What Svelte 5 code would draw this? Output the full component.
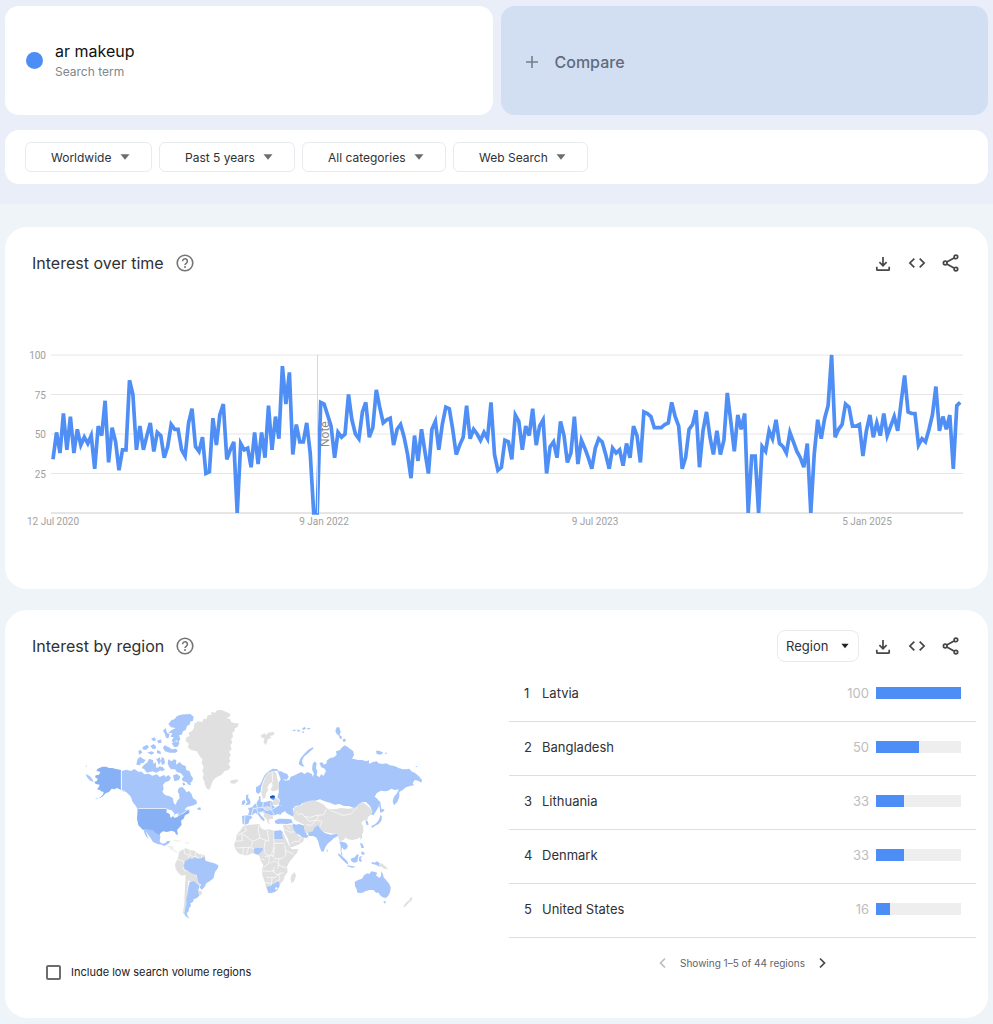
<script lang="ts">
	type Region = { name: string; value: number };

	const filters = ['Worldwide', 'Past 5 years', 'All categories', 'Web Search'];

	const regions: Region[] = [
		{ name: 'Latvia', value: 100 },
		{ name: 'Bangladesh', value: 50 },
		{ name: 'Lithuania', value: 33 },
		{ name: 'Denmark', value: 33 },
		{ name: 'United States', value: 16 }
	];

	// weekly interest, 0-100
	const interest = [
		34, 51, 38, 63, 40, 61, 38, 53, 43, 48, 44, 49, 28, 55, 49, 71, 32, 54, 45, 27,
		40, 40, 84, 75, 40, 55, 40, 49, 57, 39, 51, 49, 35, 42, 56, 53, 53, 40, 36, 57,
		66, 42, 39, 48, 25, 26, 60, 43, 62, 69, 34, 40, 45, 0, 44, 40, 41, 29, 51, 31,
		51, 35, 68, 40, 61, 47, 93, 69, 89, 37, 56, 45, 45, 57, 38, 0, 0, 70, 69, 62,
		55, 35, 51, 48, 50, 75, 59, 50, 47, 64, 70, 48, 54, 78, 67, 57, 59, 60, 43, 53,
		56, 48, 37, 22, 49, 33, 53, 39, 25, 53, 58, 40, 56, 67, 66, 53, 37, 43, 48, 68,
		47, 53, 50, 46, 51, 47, 70, 37, 27, 29, 46, 45, 34, 62, 58, 40, 55, 49, 66, 43,
		55, 59, 25, 42, 45, 35, 58, 49, 32, 38, 61, 31, 46, 41, 35, 28, 41, 47, 45, 37,
		28, 41, 38, 40, 30, 44, 35, 55, 49, 32, 64, 63, 61, 54, 54, 54, 56, 57, 70, 61,
		55, 28, 35, 53, 56, 65, 29, 52, 64, 48, 37, 52, 37, 46, 76, 58, 39, 62, 53, 63,
		0, 36, 36, 0, 42, 39, 52, 47, 59, 44, 42, 38, 51, 45, 39, 35, 29, 44, 0, 37,
		59, 47, 60, 68, 100, 48, 53, 56, 69, 67, 55, 55, 56, 36, 52, 62, 48, 57, 49, 63,
		49, 55, 61, 52, 70, 87, 64, 63, 63, 43, 47, 45, 53, 62, 80, 52, 61, 53, 62, 28,
		68, 70
	];

	const ticks = [100, 75, 50, 25];
	const dates = [
		{ x: 48, label: '12 Jul 2020' },
		{ x: 319, label: '9 Jan 2022' },
		{ x: 590, label: '9 Jul 2023' },
		{ x: 862, label: '5 Jan 2025' }
	];

	const yOf = (value: number) => 168 - value * 1.58;
	const line = interest.map((v, i) => `${(48 + i * 3.476).toFixed(1)},${yOf(v).toFixed(1)}`).join(' ');

	let lowVolume = $state(false);
</script>

{#snippet caret()}
	<svg class="caret" width="10" height="6" viewBox="0 0 10 6" aria-hidden="true"><path d="M.5.3h9L5 5.8z" /></svg>
{/snippet}

{#snippet help(label: string)}
	<button class="icon help" aria-label={label}>
		<svg width="18" height="18" viewBox="0 0 18 18">
			<circle cx="9" cy="9" r="7.8" />
			<path d="M6.6 7.2a2.4 2.4 0 1 1 3.9 1.9C9.6 9.8 9 10.1 9 11.1" />
			<circle class="dot" cx="9" cy="13.1" r="1" />
		</svg>
	</button>
{/snippet}

{#snippet tools()}
	<button class="icon" aria-label="Download CSV">
		<svg width="18" height="18" viewBox="0 0 18 18"><path d="M9 3v8.6M5.4 8.2 9 11.8l3.6-3.6M2.8 12.8v2.6q0 .8.8.8h10.8q.8 0 .8-.8v-2.6" /></svg>
	</button>
	<button class="icon" aria-label="Embed">
		<svg width="18" height="18" viewBox="0 0 18 18"><path d="M6.3 4.6 1.9 9l4.4 4.4M11.7 4.6 16.1 9l-4.4 4.4" /></svg>
	</button>
	<button class="icon" aria-label="Share">
		<svg width="18" height="18" viewBox="0 0 18 18">
			<path d="m4.8 8.1 7.2-4.2M4.8 9.9l7.2 4.2" />
			<circle cx="13.9" cy="2.9" r="1.8" />
			<circle cx="3.2" cy="9" r="1.8" />
			<circle cx="13.9" cy="15.1" r="1.8" />
		</svg>
	</button>
{/snippet}

<div class="page">
	<header>
		<div class="terms">
			<div class="term">
				<span class="bullet"></span>
				<div>
					<div class="term-name">ar makeup</div>
					<div class="term-type">Search term</div>
				</div>
			</div>
			<button class="compare">
				<svg width="14" height="14" viewBox="0 0 14 14" aria-hidden="true"><path d="M7 1v12M1 7h12" /></svg>
				Compare
			</button>
		</div>

		<div class="filters">
			{#each filters as filter}
				<div class="dropdown">
					<select aria-label={filter}>
						<option>{filter}</option>
					</select>
					{@render caret()}
				</div>
			{/each}
		</div>
	</header>

	<main>
		<section class="card">
			<div class="card-head">
				<h2>Interest over time</h2>
				{@render help('Help with interest over time')}
				<div class="tools">{@render tools()}</div>
			</div>
			<svg class="chart" viewBox="0 0 983 184" role="img" aria-label="Interest over time">
				{#each ticks as tick}
					<line class="grid" x1="46" x2="958" y1={yOf(tick)} y2={yOf(tick)} />
					<text x="41" y={yOf(tick) + 4} text-anchor="end">{tick}</text>
				{/each}
				<line class="axis" x1="46" x2="958" y1="168" y2="168" />
				<polyline points={line} />
				<line class="note-line" x1="312.5" x2="312.5" y1="10" y2="168" />
				<text class="note" transform="translate(324 102) rotate(-90)">Note</text>
				{#each dates as date}
					<text x={date.x} y="180" text-anchor="middle">{date.label}</text>
				{/each}
			</svg>
		</section>

		<section class="card">
			<div class="card-head">
				<h2>Interest by region</h2>
				{@render help('Help with interest by region')}
				<div class="tools">
					<div class="dropdown resolution">
						<select aria-label="Resolution">
							<option>Region</option>
						</select>
						{@render caret()}
					</div>
					{@render tools()}
				</div>
			</div>

			<div class="geo">
				<div class="geo-map">
					<svg class="map" viewBox="0 0 1080 690" role="img" aria-label="Interest by region">
						<!-- Greenland, Iceland -->
						<g class="none">
							<path d="M358 72L368 64 382 66 386 56 394 58 398 46 410 44 408 36 420 38 426 31 440 30 454 36 466 42 464 50 454 54 466 58 468 66 480 70 491 70 488 80 478 86 480 92 472 98 474 110 468 118 472 128 466 136 470 148 462 156 468 166 462 174 466 184 460 192 467 202 460 210 448 214 440 224 428 230 418 236 412 246 408 258 403 270 396 266 390 256 388 244 383 234 386 222 382 212 386 200 380 190 382 178 372 166 366 154 348 150 338 142 342 132 332 122 334 112 344 108 340 98 350 94 356 86z" />
							<path d="M465 243l8-3 14-2 2 6-10 7-12-1z" />
						</g>

						<!-- Canada -->
						<g class="low">
							<path d="M140 213l14-4 14 4 10-6 12 8 10 0 8 8 14-2 10 6 14-4 8 8 14-6 4 6 8-6 8 8-6 10-12 4-6 8 2 12-4 8 8 10 14 4 10 6 2 14 6 6 4-12 8-8-2-12-4-10 4-10 10-2 8 8 4 8 8-4 8 10 4 12 10 6 2 10-14 6-16 4-8 10 16-4-8 10-12 4-8 10-12 4-4-6-10-12-12-6-16 0H190l-8-14-10-12-4-14-14-14-14-4z" />
							<path d="M366 324l10-2 2 8-8 0z" />
							<path d="M280 72L290 60 298 58 306 48 318 44 332 43 346 42 356 50 354 62 344 66 346 72 336 78 332 90 324 94 320 104 312 106 316 116 310 128 304 120 296 128 290 122 296 112 286 110 292 100 280 98 290 90 302 84 288 82z" />
							<path d="M264 92l8-8 4 14 8 4-4 14-8-4-2-10zM290 130l12-6 12 4-6 12-10 2zM268 136l14 6 8 6 14-2 4 8-6 4h-18l-14-4-6-10z" />
							<path d="M228 116l10-4 6 8-8 4zM246 122l12-4 2 10-10 2zM204 140l12-6 6 8-10 8-10-2zM190 152l8-2 4 8-10 6zM226 138l10-6 8 8-4 8-8-2zM216 158l14-4 8 4-8 6zM246 150l10 4 2 8-12-2z" />
							<path d="M188 176l8-6 8 6 8 4-6 8-8 2-4 6-10-2 2-10zM206 196l12-10 4-10 12 4 2 12 6-6 2 18 10-4 4 10-14 8-12-4-16 4-8-10-8-4zM244 178l10-6 4 12-6 10zM260 170l8 6 2 14-8 6-4-12zM252 198l12 4 6 8-12 4z" />
							<path d="M280 178L290 184 296 178 304 180 303 194 314 186 322 194 332 198 334 210 344 214 348 226 354 234 352 244 346 248 348 256 340 254 334 246 324 244 320 236 326 230 318 220 306 216 300 208 288 208 282 200 278 190z" />
							<path d="M294 226l12-4 10 8-4 10-14 4zM322 248l6 0 4 8-8 0z" />
						</g>

						<!-- United States -->
						<g class="mid">
							<path d="M138 210v60l-12-6-8 4-8-2-8 10-10 4-10 10-12 6 14-12 2-8-8-2-4-4-8-2 6-8 2-6-12-2-4-6 8-4 2-6-8-4 2-6 10-2 4-8-12-4 4-6 14-6 12 0 8 4 10 0 8 2z" />
							<path d="M188 326h82l8 4 10 4 8 18 12-4 8-6 10-2 10-10 8 2-2 8-12 6-4 10-8 6 2 12-8 10-6 6 2 8 0 8-6-4-2-6-10-4-14 4-12-2-8 6-4 10-8-8-8-2-6-6-26-4-14-14-4-20z" />
						</g>
						<path class="low" d="M32 196l4 2-3 3zM32 222l12 6 8 10 4 8-10-4-10-10zM60 296l8-2-2 4z" />
						<path class="border" d="M139 212v58l10 4 16 16 6 16M190 325.500H272l8 4M302 352l14-8 14-8 12-10" />
						<path class="water" d="M276 328l14 3 8 9-6 10-5 4-3-12-10-5zM299 343l12-3-4 10-10 4z" />

						<!-- Mexico and Central America -->
						<path class="low" d="M206 386l28 5 8 8 8 4 6 6-2 16 8 6 8-1 6-6 10-2-4 8-8 4-6 4-8-4-12-2-14-6-6-10-10-14-6-8 6 16 4 8-10-10-4-10z" />
						<path class="none faint" d="M270 433l10 4 14 2 2 10 12 6-2 4-14-8-12-10zM296 420l14 0 10 5 6 1-14-1-16-2zM330 426l14 2-4 4-10-3z" />

						<!-- South America -->
						<g class="none">
							<path d="M312 455l14-8 8-2 8 4 18 4 10 8 18 4 4 8-14 8-20 6-18 12-6 14-2 12-12 2-10-8-8-12-2-14 6-14 4-8z" />
							<path d="M332 512l14 0 16 6 2 12 10 6 4 12-4 8-14-10-16-2-10-8zM332 520l6 10 2 16-2 20 0 30-6 24-4 14 4 12 8 6-8-2-8-12 4-30 2-50zM370 572l8 0 4 8-6 6-8-6z" />
							<path class="border" d="M326 446l4 16 12 2 0 14M344 452l4 16 12 2M362 456l-2 14 12 4M382 464l-4 12M306 478l18 4 6 16-8 10M334 514l-8-4" />
						</g>
						<g class="low">
							<path d="M330 484L340 478 344 474 352 478 358 472 370 476 380 474 388 470 392 482 404 486 418 490 430 496 429 504 420 516 416 534 404 544 394 550 388 562 380 570 374 562 378 554 370 546 368 536 364 524 350 520 338 512 330 508 326 498z" />
							<path d="M344 546L356 543 368 552 374 558 370 570 370 580 374 586 366 594 356 598 354 606 346 610 348 618 342 624 341 634 335 640 338 648 344 656 334 650 328 640 330 628 334 612 334 598 338 580 340 562z" />
						</g>

						<g transform="translate(465)">
							<!-- Svalbard and the Arctic islands -->
							<path class="none" d="M92 106L104 100 108 106 114 98 128 96 134 98 130 106 120 108 124 114 114 118 108 136 100 126 104 116 94 112z" />
							<path class="low" d="M186 92l10-4 0 6zM200 88l12 4-8 4zM216 86l8-6 4 6-8 4zM230 84l12 0-6 5zM214 96l8-2 0 5z" />
							<path class="low" d="M316 92l4-10 8 0 4 14-4 12-8-6zM328 104l8 6-2 8-6-4zM338 118l8-2 2 8-8 2zM438 152l10 0 12 6-8 6-12-2zM464 158l8 0-4 5zM556 198l6 0-3 4z" />
							<path class="low" d="M206 192L210 178 220 164 234 150 248 142 251 145 236 158 222 170 216 182 218 192 224 200 214 198z" />

							<!-- Russia -->
							<path class="low" d="M143 214L153 214 161 218 172 222 176 230 170 240 160 236 166 242 178 240 182 230 194 226 206 220 214 216 224 222 232 216 246 222 248 230 252 222 246 208 248 192 254 184 260 190 258 204 262 214 260 226 268 232 274 222 280 228 288 214 284 206 274 202 268 190 276 186 282 194 290 190 290 182 300 174 312 172 320 164 318 154 330 150 334 144 344 136 352 140 360 146 370 154 372 166 366 176 376 178 384 180 396 180 410 184 416 180 418 192 428 186 440 184 446 190 458 192 468 190 480 196 494 198 506 204 518 208 530 208 538 206 544 214 554 218 566 228 576 240 574 248 564 242 554 240 548 250 552 256 540 258 528 262 518 270 508 276 508 290 502 306 492 316 488 304 492 290 502 278 506 268 494 270 484 266 474 272 466 274 452 272 440 280 434 290 442 296 448 306 446 320 438 334 430 346 424 344 426 332 420 318 408 306 396 306 388 318 372 324 356 318 342 318 328 312 314 314 300 308 284 304 270 298 256 302 244 302 234 306 216 310 212 316 196 318 188 326 192 340 190 350 178 344 168 338 164 326 158 318 146 314 150 300 142 292 146 278 146 264 146 248 152 238z" />
							<path class="low" d="M446 300l5 6 2 14 2 14-5-2-2-14z" />

							<!-- Nordics -->
							<path class="none" d="M100 232L108 220 118 212 128 210 134 214 140 222 142 236 146 252 146 266 138 272 126 274 122 268 128 258 126 246 118 252 112 262 114 272 108 280 106 294 98 296 94 280 96 260 96 244z" />
							<path class="low" d="M78 276L78 262 90 254 96 242 104 226 116 214 128 206 142 208 146 214 132 212 118 216 108 228 98 246 94 262 92 276 84 282z" />
							<path class="border" d="M126 212l2 34M95 274l1-18 10-26 12-15" />

							<!-- British Isles -->
							<path class="low" d="M48 286L56 283 54 292 60 300 62 308 58 314 46 316 52 306 48 300zM36 304l7-5 4 7-5 8-7 0z" />

							<!-- Europe -->
							<path class="low" d="M54 324L66 322 72 314 80 308 86 298 92 296 92 306 106 306 120 302 128 306 128 316 136 322 148 316 160 318 170 322 174 330 166 334 156 338 152 344 142 342 136 346 124 346 112 344 104 338 94 336 88 340 94 348 104 358 102 364 94 358 84 344 76 338 66 346 54 346 58 334zM36 348L48 346 62 348 68 352 58 360 56 370 46 374 38 372z" />
							<path class="none" d="M130 298l8-4 10 6 0 10-8 6-12-2zM98 322l14-4 12 4-4 6-16 2zM104 338l12 4 12 6 2 8-12 2-2 8 6 6-8-2-4-12-10-10z" />
							<path class="border" d="M64 346l6-22 10 2 4 12-4 8M78 308l4 16 16-2 2-16M98 322l12 10 14-4-2-22M86 338l18-4M124 330l10 16M140 320l-16 10M45 346l-2 28" />
							<path class="low" d="M134 362l12-6 14 0 24 2 4 10-16 4-18-1-12 1-6-2z" />
							<path class="low" d="M86 290l5-3 1 8-4 4z" />
							<path class="second" d="M120 290l12-2 4 6-6 6-8-4z" />
							<path class="top" d="M120 289l8-3 6 1 1 5-8 1-6 1z" />

							<!-- Africa -->
							<path class="none" d="M40 378L60 374 80 373 90 373 92 384 104 390 116 388 132 392 158 393 160 400 166 414 176 436 186 448 206 447 200 460 188 474 178 486 171 500 173 516 164 528 161 540 152 550 148 562 140 574 125 580 114 578 108 562 104 545 97 526 96 508 100 496 92 482 88 468 80 463 66 460 54 466 40 466 26 460 16 448 12 434 18 420 20 404 32 390z" />
							<path class="none" d="M184 526l10-10 4 12-6 16-8 6-2-12z" />
							<path class="border" d="M44 380l6 12-28 14M34 400l4 22-20 2M38 402l30 22-4 18M68 424l22-10 26 10M88 374l-4 16 6 24M112 390l4 34M132 392v48M132 430h32M106 422l-4 24 6 18 22 4 4-28M56 442l-6 22M40 442l-2 24M16 444l40-2 18 4M132 440l-8 24 10 12 22 0 12-12-4-28M168 452l22 10M104 470l14-2-2 22-16 14M92 476l12 4M120 490l16-8 10 12-4 12M146 476l0 20 24 8M96 512l18 2 22-2M134 500l-6 14 14 10 20-6M110 532l26 0 16-14M126 534l-2 24M146 522l4 16-12 8M104 548l18 2" />
							<path class="low" d="M133 392l8 0 10-2 6 6-1 6 3 15h-26zM72 446l10-3 8 2 10-2-2 8-8 8-6 5-8-2-4-6z" />
							<path class="low" d="M110 560L122 558 128 552 136 550 142 544 148 547 148 558 142 570 132 577 116 580z" />
							<path class="water" d="M135 564l5-3 3 5-5 4z" />

							<!-- Middle East -->
							<path class="none" d="M158 374L186 374 190 386 200 400 208 410 222 414 220 424 206 434 186 442 180 440 174 418 164 398z" />
							<path class="border" d="M164 388l14 8 16 0M170 378l12 8M182 430l12-6 14 0 4-10" />
							<path class="low" d="M188 370l10 4 10-2 10 4 10 2 0 14 2 12 6 4-6 6-14-2-8-8-10-4-6-10-4-10z" />

							<!-- Central Asia and China -->
							<path class="none" d="M192 322L206 318 216 316 220 308 238 302 254 302 266 306 278 312 288 320 294 326 316 328 334 324 352 326 374 324 386 312 396 306 406 312 418 322 428 334 424 344 414 350 412 360 400 362 394 368 400 380 400 396 394 408 384 416 368 420 354 418 346 412 342 420 330 424 324 412 318 402 302 400 284 396 268 388 262 388 250 392 238 400 226 398 222 386 222 374 206 366 194 360 190 350z" />
							<path class="border" d="M198 334l8 10 10-4 8 10 18 2 16-6 24-2 6-16M222 348l16 16 20-4 10-14M228 374l16 2 14-16 18 4M286 320l22 14 30 12 24-4 12-12 8-8M276 364l-8 20" />

							<!-- South and East Asia -->
							<path class="low" d="M234 398L248 394 254 382 266 376 270 386 276 392 286 400 302 404 318 402 324 404 320 410 312 414 306 420 292 432 286 442 280 456 274 454 268 438 264 422 258 412 248 408 236 408zM290 448l3 2 0 6-3-2zM328 424l10 2 10 2 6 10-4 8-8 4-6-8-2 12 4 12-4 0-2-14 0-14z" />
							<path class="low" d="M408 360l5 4 3 10-5 2-4-8zM450 330l8-4 6 4-6 6-8 2zM452 344l4 6-2 12-8 10-12 6-8 6-2-6 12-6 8-8 4-8zM392 404l4 8-4 8zM390 428l8 4 4 12-8 0z" />
							<path class="low" d="M326 460l10 8 16 16 4 10-8-4-14-14-10-12zM352 496l14 2 12 3-12 2-14-4zM362 476l12-4 8-10 4 4-2 8-2 12-10 2-8-4zM388 470l10-2-6 6 4 10-6 2-4-6zM394 454l10 4-2 8-8-4z" />
							<path class="low" d="M424 486l10 2 6-4 8 4v12l-10-6-12-2z" />
							<path class="none" d="M448 488l10 4 10 8 6 8-12-2-6-6-8 0zM520 618l10-12 8-6 4-8 6 2-4 8-8 6-8 10-6 4z" />

							<!-- Australia -->
							<path class="low" d="M374 546L384 540 396 536 402 526 412 520 418 522 424 514 434 516 442 518 438 526 448 534 453 528 454 514 458 520 461 532 470 542 478 552 482 562 481 574 476 586 468 594 458 592 450 586 446 578 438 578 430 570 418 570 406 574 396 579 382 578 380 568 375 558zM460 604l8 0-3 8z" />
						</g>
					</svg>
					<label class="low-volume">
						<input type="checkbox" bind:checked={lowVolume} />
						Include low search volume regions
					</label>
				</div>

				<div class="ranking">
					<ol>
						{#each regions as region, i}
							<li>
								<span class="rank">{i + 1}</span>
								<span class="name">{region.name}</span>
								<span class="value">{region.value}</span>
								<span class="track"><span class="fill" style="width: {region.value}%"></span></span>
							</li>
						{/each}
					</ol>
					<nav class="pager" aria-label="Regions">
						<button class="icon" aria-label="Previous" disabled>
							<svg width="14" height="14" viewBox="0 0 14 14"><path d="M9 2.500 4.500 7 9 11.500" /></svg>
						</button>
						<span>Showing 1–5 of 44 regions</span>
						<button class="icon" aria-label="Next">
							<svg width="14" height="14" viewBox="0 0 14 14"><path d="M5 2.500 9.500 7 5 11.500" /></svg>
						</button>
					</nav>
				</div>
			</div>
		</section>
	</main>
</div>

<style>
	:global(body) {
		margin: 0;
		background: #eff4f9;
	}

	.page {
		font-family: Inter, 'Open Sans', sans-serif;
		font-size: 13px;
		color: #303134;
	}

	button,
	select {
		font: inherit;
		color: inherit;
		cursor: pointer;
	}

	header {
		display: flex;
		flex-direction: column;
		gap: 15px;
		padding: 6px 5px 20px;
		background: #e9eef9;
	}

	.terms {
		display: grid;
		grid-template-columns: 1fr 1fr;
		gap: 8px;
	}

	.term,
	.compare {
		display: flex;
		align-items: center;
		height: 109px;
		box-sizing: border-box;
		border: 0;
		border-radius: 14px;
	}

	.term {
		gap: 12px;
		padding: 0 21px;
		background: #fff;
	}

	.bullet {
		width: 17px;
		height: 17px;
		border-radius: 50%;
		background: #4c8df6;
	}

	.term-name {
		font-size: 16px;
		line-height: 22px;
		color: #111;
	}

	.term-type {
		font-size: 12px;
		line-height: 20px;
		color: #80868b;
	}

	.compare {
		gap: 16px;
		padding: 2px 24px 0;
		background: #d2dff2;
		color: #5f6b7c;
		font-size: 16px;
		font-weight: 500;
	}

	.compare svg {
		fill: none;
		stroke: #71808c;
		stroke-width: 1.6;
	}

	.filters {
		display: flex;
		flex-wrap: wrap;
		gap: 7px;
		padding: 12px 20px;
		border-radius: 14px;
		background: #fff;
	}

	.dropdown {
		display: inline-grid;
		align-items: center;
	}

	.dropdown > :global(*) {
		grid-area: 1 / 1;
	}

	.dropdown select {
		appearance: none;
		height: 30px;
		padding: 0 39px 0 25px;
		border: 1px solid #e8eaed;
		border-radius: 6px;
		background: #fff;
		font-size: 12px;
	}

	.caret {
		justify-self: end;
		margin-right: 22px;
		fill: #6b6e70;
		pointer-events: none;
	}

	main {
		display: flex;
		flex-direction: column;
		gap: 21px;
		padding: 23px 5px 5px;
	}

	.card {
		border-radius: 22px;
		background: #fff;
	}

	.card-head {
		display: flex;
		align-items: center;
		gap: 8px;
		height: 32px;
		padding: 20px 20px 0 27px;
	}

	h2 {
		margin: 0;
		font-size: 16px;
		font-weight: 400;
	}

	.icon {
		display: grid;
		place-items: center;
		width: 34px;
		height: 30px;
		padding: 0;
		border: 0;
		background: none;
	}

	.icon svg {
		fill: none;
		stroke: #444746;
		stroke-width: 1.7;
	}

	.help {
		width: 26px;
	}

	.help svg {
		stroke: #757575;
		stroke-width: 1.6;
	}

	.help .dot {
		fill: #757575;
		stroke: none;
	}

	.tools {
		display: flex;
		align-items: center;
		margin-left: auto;
	}

	.resolution {
		margin-right: 7px;
	}

	.resolution select {
		height: 32px;
		padding: 0 29px 0 8px;
		border-radius: 8px;
		font-size: 13px;
	}

	.resolution .caret {
		width: 8px;
		margin-right: 10px;
		fill: #202124;
	}

	.chart {
		display: block;
		width: 100%;
		margin-top: 66px;
		padding-bottom: 60px;
	}

	.chart text {
		font-family: Roboto, sans-serif;
		font-size: 10px;
		fill: #a0a0a0;
	}

	.chart .note {
		font-size: 12px;
		fill: #8a8a8a;
	}

	.grid {
		stroke: #e6e6e6;
	}

	.axis {
		stroke: #ccc;
	}

	.note-line {
		stroke: #d8d8d8;
	}

	polyline {
		fill: none;
		stroke: #4f8ff5;
		stroke-width: 3.7;
	}

	.geo {
		display: grid;
		grid-template-columns: 504fr 467fr;
		padding: 6px 12px 37px 0;
	}

	.geo-map {
		display: flex;
		flex-direction: column;
		gap: 33px;
		padding-top: 32px;
	}

	.map {
		margin: 0 74px 0 70px;
	}

	.map .low {
		fill: #a6c6fb;
	}

	.map .mid {
		fill: #88b1f5;
	}

	.map .top {
		fill: #1550b5;
	}

	.map .second {
		fill: #5a92ec;
	}

	.map .none {
		fill: #e0e0e0;
	}

	.map .faint {
		opacity: 0.5;
	}

	.map .water {
		fill: #fff;
	}

	.map .border {
		fill: none;
		stroke: #fff;
		stroke-width: 2;
	}

	.low-volume {
		display: flex;
		align-items: center;
		gap: 10px;
		margin-left: 41px;
		font-size: 11px;
		line-height: 18px;
		color: #202124;
	}

	.low-volume input {
		appearance: none;
		box-sizing: border-box;
		width: 15px;
		height: 15px;
		margin: 0;
		border: 2px solid #6b6e70;
		border-radius: 2px;
	}

	.low-volume input:checked {
		background: #4c8df6;
	}

	ol {
		margin: 0;
		padding: 0;
		list-style: none;
	}

	li {
		display: flex;
		align-items: center;
		height: 54px;
		box-sizing: border-box;
		padding: 0 15px 3px;
		border-bottom: 1px solid #dedede;
	}

	.rank {
		width: 18px;
	}

	.name {
		flex: 1;
	}

	.value {
		margin-right: 7px;
		color: #bdbdbd;
	}

	.track {
		width: 85px;
		height: 12px;
		background: #eee;
	}

	.fill {
		display: block;
		height: 100%;
		background: #4c8df6;
	}

	.pager {
		display: flex;
		align-items: center;
		justify-content: center;
		padding-top: 10px;
		font-size: 10px;
		color: #5f6368;
	}

	.pager .icon:disabled {
		opacity: 0.35;
	}
</style>
